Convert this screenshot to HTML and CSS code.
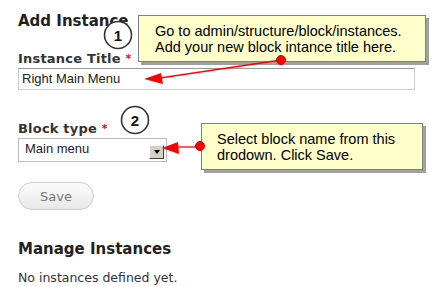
FILE: index.html
```html
<!DOCTYPE html>
<html lang="en">
<head>
    <meta charset="UTF-8">
    <title>Add Instance</title>
    <link rel="stylesheet" href="styles.css">
</head>
<body>
    <div class="page">
        <h2 class="title">Add Instance</h2>

        <label class="field-label">Instance Title <span class="req">*</span></label>
        <div class="text-input">Right Main Menu</div>

        <label class="field-label block-label">Block type <span class="req">*</span></label>
        <div class="select-box">
            <span class="select-value">Main menu</span>
            <span class="select-btn"><span class="select-arrow"></span></span>
        </div>

        <button class="save-btn">Save</button>

        <h2 class="title manage">Manage Instances</h2>
        <p class="empty">No instances defined yet.</p>

        <!-- annotations -->
        <div class="callout callout-1">Go to admin/structure/block/instances.<br>Add your new block intance title here.</div>
        <div class="callout callout-2">Select block name from this<br>drodown. Click Save.</div>

        <svg class="marks" width="435" height="287" viewBox="0 0 435 287">
            <line x1="281" y1="60" x2="160" y2="78" stroke="#f00" stroke-width="1.3"/>
            <polygon points="144,79 161,73 163,84" fill="#f00"/>
            <circle cx="281" cy="60" r="4.5" fill="#f00" stroke="#c00" stroke-width="1"/>

            <line x1="176" y1="147" x2="199" y2="147" stroke="#f00" stroke-width="1.3"/>
            <polygon points="162,148 178,142 179,154" fill="#f00"/>
            <circle cx="200" cy="146" r="4.5" fill="#f00" stroke="#c00" stroke-width="1"/>

            <circle cx="118" cy="35" r="13.5" fill="#fff" stroke="#333" stroke-width="1.6"/>
            <text x="118" y="40.5" text-anchor="middle" class="num">1</text>
            <circle cx="135" cy="120" r="13.5" fill="#fff" stroke="#333" stroke-width="1.6"/>
            <text x="135" y="125.5" text-anchor="middle" class="num">2</text>
        </svg>
    </div>
</body>
</html>
```

FILE: styles.css
```css
/* Formulario de instancias con anotaciones */
body { margin: 0; background: #fff; font-family: "DejaVu Sans", Verdana, sans-serif; color: #333; }
.page { position: relative; width: 435px; height: 287px; padding: 11px 18px 0; box-sizing: border-box; overflow: hidden; }
.title { margin: 0; font-size: 15px; line-height: 20px; font-weight: bold; color: #222; }
.title.manage { margin-top: 29px; }
.field-label { display: block; margin-top: 20px; font-size: 13px; line-height: 15px; font-weight: bold; color: #333; letter-spacing: 0.2px; }
.field-label.block-label { margin-top: 31px; }
.req { color: #f00; font-size: 11px; vertical-align: top; }
.text-input { margin-top: 2px; width: 397px; height: 22px; box-sizing: border-box; border: 1px solid #ccc; border-top-color: #999; padding: 0 3px; font: 13px/20px "Liberation Sans", Arial, sans-serif; color: #222; }
.select-box { margin-top: 2px; width: 149px; height: 24px; box-sizing: border-box; border: 1px solid #bbb; display: flex; align-items: flex-end; justify-content: space-between; padding: 0 2px 2px 6px; font: 13px/20px "Liberation Sans", Arial, sans-serif; color: #222; }
.select-value { align-self: center; }
.select-btn { width: 15px; height: 14px; box-sizing: border-box; background: #d4d0c8; border: 1px solid; border-color: #fff #404040 #404040 #fff; display: flex; align-items: center; justify-content: center; }
.select-arrow { width: 0; height: 0; border-left: 3.5px solid transparent; border-right: 3.5px solid transparent; border-top: 4px solid #000; }
.save-btn { display: block; margin-top: 20px; width: 76px; height: 28px; border: 1px solid #ccc; border-radius: 14px; background: linear-gradient(#fbfbfb, #e9e9e9); font-family: "DejaVu Sans", Verdana, sans-serif; font-size: 13px; color: #777; padding: 0; }
.empty { margin: 11px 0 0; font-size: 12.5px; line-height: 15px; color: #333; }
.callout { position: absolute; box-sizing: border-box; background: #ffffcc; border: 1px solid #808080; box-shadow: 3px 3px 0 #a0a0a0; font: 14.5px/16px "Liberation Sans", Arial, sans-serif; color: #000; }
.callout-1 { left: 138px; top: 15px; width: 288px; height: 47px; padding: 7px 0 0 16px; }
.callout-2 { left: 201px; top: 123px; width: 222px; height: 47px; padding: 7px 0 0 15px; }
.marks { position: absolute; left: 0; top: 0; }
.num { font: bold 15px "Liberation Sans", Arial, sans-serif; fill: #111; }
```
